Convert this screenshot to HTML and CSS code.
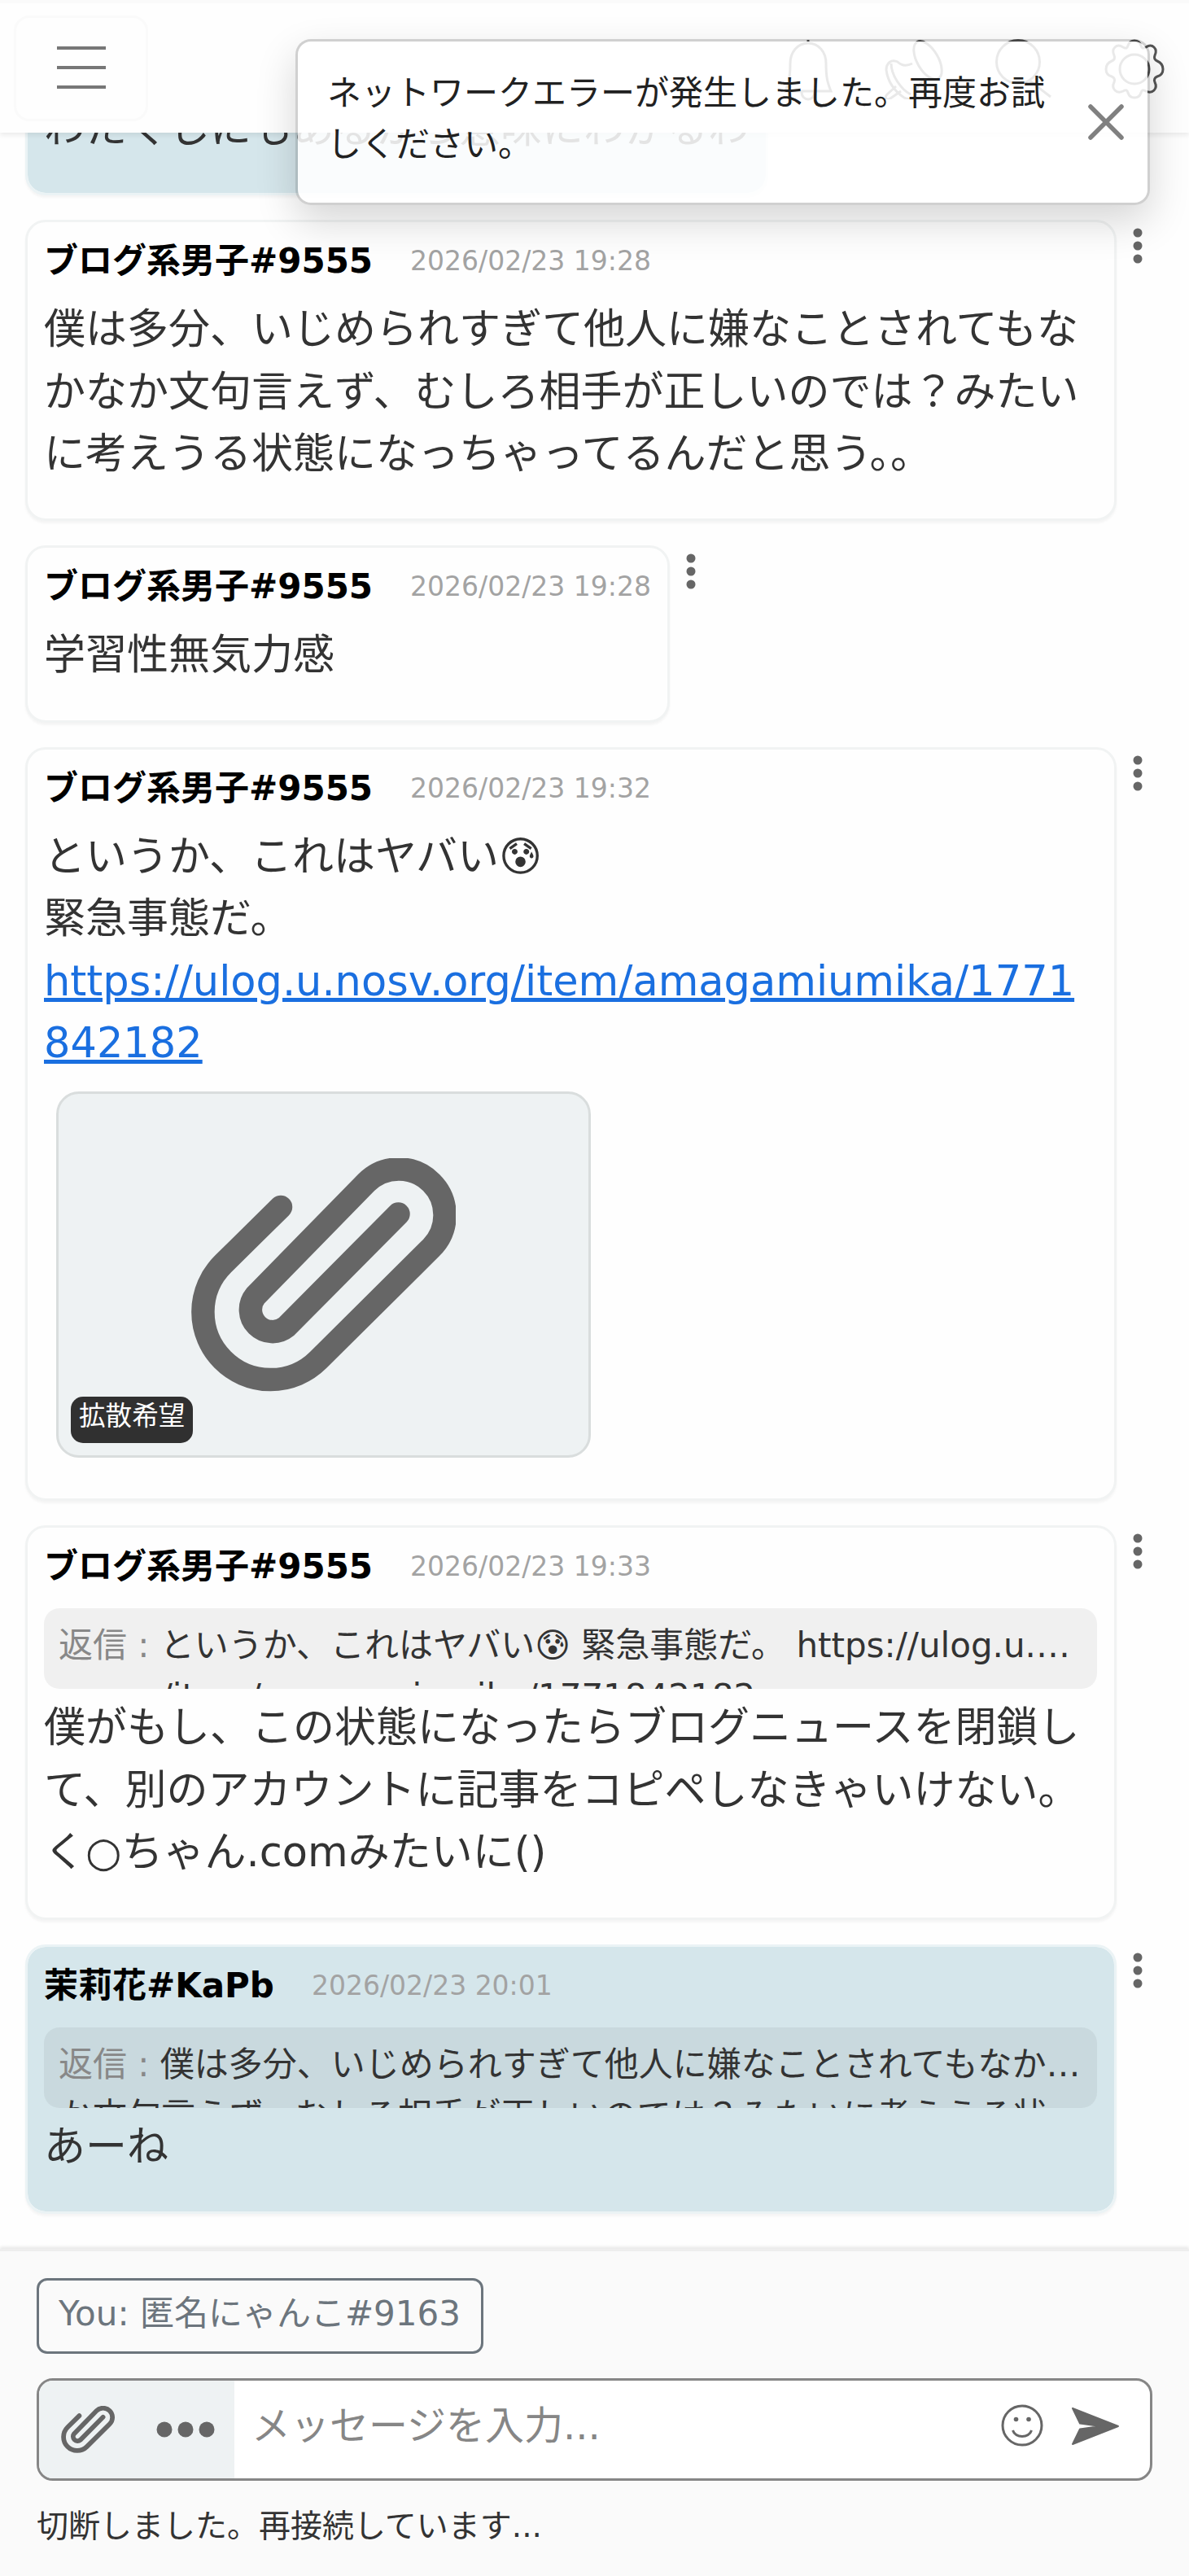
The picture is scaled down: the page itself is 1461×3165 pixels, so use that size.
FILE: index.html
```html
<!DOCTYPE html>
<html lang="ja">
<head>
    <meta charset="UTF-8">
    <meta name="viewport" content="width=device-width, initial-scale=1.0">
    <title>チャット</title>
    <link rel="stylesheet" href="styles.css">
</head>
<body>
    <svg class="defs">
        <symbol id="clip" viewBox="0 0 325 287">
            <path d="M110 60L39 130A83 83 0 0 0 156 248L295 110A56 56 0 0 0 215 30L79 169A27 27 0 0 0 117 207L254.500 68.500" fill="none" stroke="#666" stroke-width="28.500" stroke-linecap="round"/>
        </symbol>
        <symbol id="dots" viewBox="0 0 12 44">
            <circle cx="6" cy="6" r="5.500"/><circle cx="6" cy="22" r="5.500"/><circle cx="6" cy="38" r="5.500"/>
        </symbol>
    </svg>

    <header class="navbar">
        <button class="toggler"><span></span><span></span><span></span></button>
        <div class="nav-icons">
            <svg width="60" height="78" viewBox="0 0 60 78"><path d="M30 1v5M30 5C17 5 8 16 8 30c0 18-2 24-6 34h56c-4-10-6-16-6-34C52 16 43 5 30 5zM22 65c0 12 16 12 16 0"/></svg>
            <svg width="72" height="74" viewBox="0 0 72 74"><ellipse cx="53" cy="26" rx="13" ry="26" transform="rotate(-30 53 26)"/><path d="M34 30c-8 4-14 2-18-2-8-4-14 2-14 10 2 14 10 26 22 34 8 4 14 0 15-6 0-6 4-10 10-18M14 58L3 68c-4 4 0 8 4 5l13-9M8 30c0 14 12 32 24 38"/></svg>
            <svg width="70" height="74" viewBox="0 0 70 74"><circle cx="28" cy="28" r="26.500"/><path d="M42 51L68 71"/></svg>
            <svg width="74" height="74" viewBox="0 0 74 74"><circle cx="37" cy="37" r="18"/><path d="M29 8q2-6 8-6t8 6q1 5 6 2 6-4 10 0t1 10q-2 5 3 7 7 3 7 10t-7 9q-5 2-3 7 3 6-1 10t-10 1q-5-3-6 2-2 6-8 6t-8-6q-1-5-6-2-6 3-10-1t-1-10q2-5-3-7-7-2-7-9t7-10q5-2 3-7-3-6 1-10t10 0q5 3 6-2z"/></svg>
        </div>
    </header>

    <main class="log">
        <div class="row">
            <div class="bubble mine">
                <div class="meta"><b>茉莉花#KaPb</b><time>2026/02/23 19:27</time></div>
                <p>わたくしにもあるから意味にわかるわ</p>
            </div>
        </div>
        <div class="row">
            <div class="bubble">
                <div class="meta"><b>ブログ系男子#9555</b><time>2026/02/23 19:28</time></div>
                <p>僕は多分、いじめられすぎて他人に嫌なことされてもなかなか文句言えず、むしろ相手が正しいのでは？みたいに考えうる状態になっちゃってるんだと思う。。</p>
            </div>
            <svg class="more"><use href="#dots"/></svg>
        </div>
        <div class="row">
            <div class="bubble">
                <div class="meta"><b>ブログ系男子#9555</b><time>2026/02/23 19:28</time></div>
                <p>学習性無気力感</p>
            </div>
            <svg class="more"><use href="#dots"/></svg>
        </div>
        <div class="row">
            <div class="bubble">
                <div class="meta"><b>ブログ系男子#9555</b><time>2026/02/23 19:32</time></div>
                <p>というか、これはヤバい😰<br>緊急事態だ。<br><a href="#">https://ulog.u.nosv.org/item/amagamiumika/1771842182</a></p>
                <div class="attachment">
                    <svg><use href="#clip"/></svg>
                    <span class="tag">拡散希望</span>
                </div>
            </div>
            <svg class="more"><use href="#dots"/></svg>
        </div>
        <div class="row">
            <div class="bubble">
                <div class="meta"><b>ブログ系男子#9555</b><time>2026/02/23 19:33</time></div>
                <div class="reply"><span>返信 : </span>というか、これはヤバい😰 緊急事態だ。 https://ulog.u.nosv.org/item/amagamiumika/1771842182</div>
                <p>僕がもし、この状態になったらブログニュースを閉鎖して、別のアカウントに記事をコピペしなきゃいけない。<br>く○ちゃん.comみたいに()</p>
            </div>
            <svg class="more"><use href="#dots"/></svg>
        </div>
        <div class="row">
            <div class="bubble mine">
                <div class="meta"><b>茉莉花#KaPb</b><time>2026/02/23 20:01</time></div>
                <div class="reply"><span>返信 : </span>僕は多分、いじめられすぎて他人に嫌なことされてもなかなか文句言えず、むしろ相手が正しいのでは？みたいに考えうる状<br>態になっちゃってるんだと思う。。</div>
                <p>あーね</p>
            </div>
            <svg class="more"><use href="#dots"/></svg>
        </div>
    </main>

    <footer class="composer">
        <button class="you">You: 匿名にゃんこ#9163</button>
        <div class="input-group">
            <div class="addon">
                <svg class="icon-clip"><use href="#clip"/></svg>
                <svg class="icon-dots" viewBox="0 0 72 20"><circle cx="10" cy="10" r="9.500"/><circle cx="36" cy="10" r="9.500"/><circle cx="62" cy="10" r="9.500"/></svg>
            </div>
            <div class="placeholder">メッセージを入力...</div>
            <svg class="icon-smile" viewBox="0 0 52 52"><circle cx="26" cy="26" r="24"/><path d="M14.500 32c3 10 20 10 23 0"/><ellipse class="eye" cx="18.500" cy="18.500" rx="2.800" ry="2.800"/><ellipse class="eye" cx="34" cy="18.500" rx="2.800" ry="2.800"/></svg>
            <svg class="icon-send" viewBox="0 0 60 48"><path d="M2 2L58 24L2 46L11 27.500L36 24L11 20.500Z"/></svg>
        </div>
        <div class="status">切断しました。再接続しています...</div>
    </footer>

    <div class="toast">
        <div class="toast-body">ネットワークエラーが発生しました。再度お試しください。</div>
        <svg class="close" viewBox="0 0 44 44"><path d="M3 3L41 41M41 3L3 41"/></svg>
    </div>
</body>
</html>
```
FILE: styles.css
```css
* {
    box-sizing: border-box;
    margin: 0;
    padding: 0;
}

body {
    display: flex;
    flex-direction: column;
    height: 100vh;
    overflow: hidden;
    position: relative;
    background: #fefefe;
    color: #333;
    font-family: "DejaVu Sans", "Noto Sans CJK JP", sans-serif;
    font-size: 51px;
    line-height: 1.5;
}

button {
    font-family: inherit;
    background: none;
}

.defs {
    position: absolute;
    width: 0;
    height: 0;
}

.navbar {
    display: flex;
    flex: none;
    justify-content: space-between;
    align-items: flex-start;
    height: 163px;
    padding: 15px 30px 0 17px;
    background: #fefefe;
    border-top: 4px solid #fafafa;
    box-shadow: 0 3px 6px rgba(0, 0, 0, 0.08);
    z-index: 1;
}

.toggler {
    display: flex;
    flex-direction: column;
    align-items: center;
    justify-content: center;
    gap: 20px;
    width: 165px;
    height: 130px;
    padding-bottom: 2px;
    border: 3px solid #fafafa;
    border-radius: 19px;
}

.toggler span {
    width: 60px;
    height: 4px;
    background: #777;
}

.nav-icons {
    display: flex;
    gap: 64px;
    padding-top: 29px;
}

.nav-icons svg {
    fill: none;
    stroke: #555;
    stroke-width: 3;
}

.log {
    flex: 1;
    display: flex;
    flex-direction: column;
    justify-content: flex-end;
    gap: 30px;
    overflow: hidden;
    padding: 0 53px 43px 31px;
}

.row {
    display: flex;
    flex: none;
    align-items: flex-start;
    gap: 20px;
}

.bubble {
    max-width: 1341px;
    padding: 10px 20px 41px;
    background: #fefefe;
    border: 3px solid #f1f3f3;
    border-radius: 25px;
    box-shadow: 0 3px 3px rgba(0, 0, 0, 0.04);
    overflow-wrap: anywhere;
    word-break: break-all;
}

.bubble p {
    line-height: 76.4px;
}

.mine {
    background: #d5e6eb;
    background-clip: padding-box;
    border-color: #ebf3f5;
}

.meta {
    display: flex;
    align-items: center;
    gap: 46px;
    height: 76px;
    margin-bottom: 8px;
    color: #000;
    font-size: 42px;
    line-height: 76px;
}

.meta time {
    color: #a3a3a3;
    font-size: 33px;
}

.bubble a {
    color: #1a6fe0;
}

.more {
    width: 12px;
    height: 44px;
    margin-top: 10px;
    fill: #666;
}

.reply {
    display: -webkit-box;
    -webkit-box-orient: vertical;
    -webkit-line-clamp: 1;
    height: 99px;
    margin: 13px 1px 10px 0;
    padding: 14px 18px 0;
    overflow: hidden;
    background: rgba(0, 0, 0, 0.055);
    border-radius: 19px;
    font-size: 42px;
    line-height: 63px;
}

.meta:has(+ .reply) {
    margin-bottom: 0;
}

.reply span {
    color: #888;
}

.attachment {
    display: flex;
    align-items: center;
    justify-content: center;
    position: relative;
    width: 657px;
    height: 450px;
    margin: 21px 0 9px 15px;
    background: #eef2f3;
    border: 3px solid #d9dddd;
    border-radius: 28px;
}

.attachment svg {
    width: 325px;
    height: 287px;
}

.tag {
    position: absolute;
    left: 15px;
    bottom: 15px;
    height: 57px;
    padding: 0 10px;
    background: #303030;
    border-radius: 15px;
    color: #fff;
    font-size: 32.6px;
    line-height: 49px;
}

.composer {
    flex: none;
    height: 402px;
    padding: 33px 45px 0;
    background: #fafafa;
    border-top: 3px solid #eee;
    box-shadow: 0 -2px 4px rgba(0, 0, 0, 0.1);
}

.you {
    display: block;
    width: 549px;
    height: 93px;
    padding: 0 0 15px 24px;
    border: 3px solid #6c757d;
    border-radius: 13px;
    color: #6c757d;
    font-size: 42px;
    text-align: left;
}

.input-group {
    display: flex;
    align-items: center;
    height: 126px;
    margin-top: 30px;
    padding-right: 37px;
    background: #fff;
    border: 3px solid #868686;
    border-radius: 20px;
    overflow: hidden;
}

.addon {
    display: flex;
    align-items: center;
    gap: 51px;
    width: 240px;
    height: 100%;
    padding-left: 27px;
    background: #eef2f3;
}

.icon-clip {
    width: 66px;
    height: 58px;
}

.icon-dots {
    width: 72px;
    height: 20px;
    fill: #666;
}

.placeholder {
    flex: 1;
    padding: 0 0 10px 21px;
    color: #868686;
    font-size: 48px;
}

.icon-smile {
    width: 52px;
    height: 52px;
    margin: 0 34px 10px 0;
    fill: none;
    stroke: #666;
    stroke-width: 3;
}

.icon-smile .eye {
    fill: #666;
    stroke: none;
}

.icon-send {
    width: 60px;
    height: 48px;
    margin-bottom: 8px;
    fill: #666;
    stroke: #666;
    stroke-width: 2;
    stroke-linejoin: round;
}

.status {
    margin-top: 27px;
    font-size: 39px;
}

.toast {
    display: flex;
    position: absolute;
    top: 48px;
    left: 363px;
    width: 1050px;
    height: 204px;
    z-index: 2;
    background: rgba(255, 255, 255, 0.87);
    background-clip: padding-box;
    border: 3px solid rgba(0, 0, 0, 0.18);
    border-radius: 19px;
    box-shadow: 0 20px 50px rgba(0, 0, 0, 0.16);
}

.toast-body {
    width: 930px;
    padding: 32px 0 0 36px;
    color: #212121;
    font-size: 42px;
}

.close {
    width: 44px;
    height: 44px;
    margin: 77px 0 0 41px;
    stroke: #808080;
    stroke-width: 5.5;
    stroke-linecap: round;
}
```
